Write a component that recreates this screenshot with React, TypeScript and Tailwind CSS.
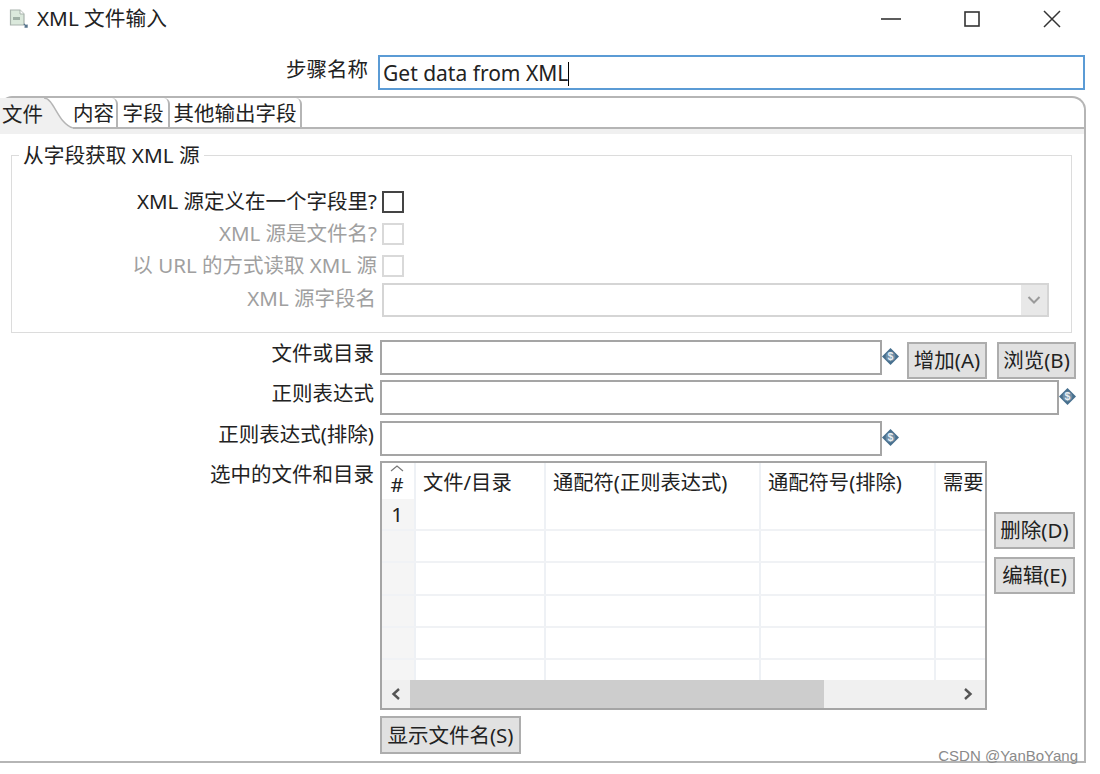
import React from "react";

const FONT = { fontFamily: '"Noto Sans", "Noto Sans CJK SC", sans-serif' };

function Dollar() {
  return (
    <svg width="17" height="17" viewBox="0 0 16 16" className="shrink-0">
      <path d="M8 0 L16 8 L8 16 L0 8 Z" fill="#466f8e" />
      <circle cx="8" cy="8" r="4.6" fill="#6f8da5" />
      <text x="8" y="11.4" textAnchor="middle" fontSize="10" fontWeight="700" fill="#e8eef3" fontFamily="Liberation Sans, sans-serif">$</text>
    </svg>
  );
}

function Btn({ children, w, h = "h-[37px]" }: { children: React.ReactNode; w: string; h?: string }) {
  return (
    <div className={`${w} ${h} shrink-0 flex items-center justify-center bg-[#e1e1e1] border-2 border-[#adadad] text-[20.5px] leading-none text-[#222] whitespace-nowrap`}>
      {children}
    </div>
  );
}

function Check({ disabled }: { disabled?: boolean }) {
  return <div className={`w-[22px] h-[22px] border-2 bg-white ${disabled ? "border-[#d9d9d9]" : "border-[#444]"}`} />;
}

function GroupRow({ label, disabled, h }: { label: string; disabled?: boolean; h: string }) {
  return (
    <div className={`flex items-center ${h}`}>
      <div className={`w-[365px] text-right text-[20.5px] leading-none whitespace-nowrap pb-[2px] ${disabled ? "text-[#a0a0a0]" : "text-[#222]"}`}>{label}</div>
      <div className="ml-[5px] -mt-[1px]"><Check disabled={disabled} /></div>
    </div>
  );
}

function FieldLabel({ children }: { children: React.ReactNode }) {
  return <div className="w-[374px] shrink-0 text-right text-[20.5px] leading-none text-[#222] whitespace-nowrap pt-[3px]">{children}</div>;
}

function Input({ w, h }: { w: string; h: string }) {
  return <div className={`${w} ${h} shrink-0 border-2 border-[#a5a5a5] bg-white`} />;
}

const COLS = ["w-[32px]", "w-[130px]", "w-[215px]", "w-[175px]", "w-[51px]"];
const HEAD = ["#", "文件/目录", "通配符(正则表达式)", "通配符号(排除)", "需要"];
const ROWH = ["h-[32px]", "h-[32px]", "h-[33px]", "h-[32px]", "h-[32px]", "h-[20px]"];

export default function App() {
  return (
    <div className="relative w-[1100px] h-[774px] bg-white overflow-hidden text-[#222]" style={FONT}>
      {/* title bar */}
      <div className="h-[38px] flex items-center pl-[9px]">
        <svg width="20" height="20" viewBox="0 0 20 20">
          <path d="M1.5 1 H11 L15 5 V16 H1.5 Z" fill="#dbe9dc" stroke="#a9b4ad" strokeWidth="1.2" />
          <path d="M11 1 V5 H15" fill="#ffffff" stroke="#a9b4ad" strokeWidth="1" />
          <rect x="4" y="8" width="7" height="3" fill="#9fb0a5" />
          <path d="M15 15 L18 18 M18 15.5 V18 H15.5" stroke="#56748c" strokeWidth="1.4" fill="none" />
        </svg>
        <div className="ml-[8px] pb-[2px] text-[20.7px] leading-none whitespace-nowrap">XML 文件输入</div>
        <div className="ml-auto flex items-center">
          <svg width="20" height="16" viewBox="0 0 20 16"><path d="M0 8 H20" stroke="#333" strokeWidth="1.6" /></svg>
          <svg className="ml-[63px]" width="16" height="16" viewBox="0 0 16 16"><rect x="1" y="1" width="14" height="14" fill="none" stroke="#333" strokeWidth="1.6" /></svg>
          <svg className="ml-[63px] mr-[39px]" width="18" height="18" viewBox="0 0 18 18"><path d="M1 1 L17 17 M17 1 L1 17" stroke="#333" strokeWidth="1.5" /></svg>
        </div>
      </div>

      {/* step name */}
      <div className="mt-[17px] flex items-start h-[35px]">
        <div className="w-[368px] text-right text-[20.5px] leading-none pt-[4px] whitespace-nowrap">步骤名称</div>
        <div className="ml-[10px] w-[707px] h-[35px] border-2 border-[#5b9bd5] bg-white flex items-center pl-[3px] pt-[2px] text-[21px] leading-none whitespace-nowrap">
          Get data from XML<span className="w-px h-[24px] bg-black" />
        </div>
      </div>

      {/* tab folder */}
      <div className="mt-[6px] w-[1086px] h-[667px] border-t-2 border-r-2 border-b-2 border-[#b5b5b5] rounded-tr-[14px] rounded-tl-[12px] flex flex-col">
        <div className="h-[31px] flex items-stretch shrink-0 text-[20.5px] leading-none whitespace-nowrap">
          <div className="w-[44px] bg-[#f0f0f0] flex items-center justify-center pt-[2px] pl-[1px]">文件</div>
          <svg width="29" height="31" viewBox="0 0 29 31" className="shrink-0">
            <path d="M0 0 C10 0 14 26 29 31 H0 Z" fill="#f0f0f0" />
            <path d="M0 0 C10 0 14 26 29 30" fill="none" stroke="#b5b5b5" strokeWidth="1.5" />
          </svg>
          <div className="flex-1 flex border-b-2 border-[#b5b5b5]">
            <div className="w-[45px] flex items-center justify-center border-r-2 border-[#b5b5b5] rounded-tr-[6px] pt-[2px] pr-[2px]">内容</div>
            <div className="w-[52px] flex items-center justify-center border-r-2 border-[#b5b5b5] rounded-tr-[6px] pt-[2px]">字段</div>
            <div className="w-[132px] flex items-center justify-center border-r-2 border-[#b5b5b5] rounded-tr-[6px] pt-[2px]">其他输出字段</div>
          </div>
        </div>
        <div className="h-[5px] bg-[#f0f0f0] shrink-0" />

        {/* group */}
        <div className="relative mt-[21px] ml-[11px] w-[1061px] h-[178px] shrink-0 border border-[#dcdcdc] pt-[30px]">
          <div className="absolute left-[7px] -top-[13px] bg-white px-[4px] text-[20.7px] leading-[24px] whitespace-nowrap">从字段获取 XML 源</div>
          <GroupRow label="XML 源定义在一个字段里?" h="h-[32px]" />
          <GroupRow label="XML 源是文件名?" disabled h="h-[32px]" />
          <GroupRow label="以 URL 的方式读取 XML 源" disabled h="h-[32px]" />
          <div className="flex items-center h-[36px]">
            <div className="w-[364px] text-right text-[20.5px] leading-none text-[#a0a0a0] whitespace-nowrap pb-[3px]">XML 源字段名</div>
            <div className="ml-[6px] w-[667px] h-[34px] border-2 border-[#d5d5d5] bg-white flex justify-end items-center">
              <div className="w-[26px] h-full bg-[#e8e8e8] flex items-center justify-center">
                <svg width="14" height="10" viewBox="0 0 14 10"><path d="M1.5 2 L7 7.5 L12.5 2" fill="none" stroke="#9a9a9a" strokeWidth="2" /></svg>
              </div>
            </div>
          </div>
        </div>

        {/* fields */}
        <div className="mt-[7px] flex flex-col">
          <div className="flex h-[40px]">
            <FieldLabel>文件或目录</FieldLabel>
            <div className="ml-[6px]"><Input w="w-[502px]" h="h-[35px]" /></div>
            <div className="mt-[8px]"><Dollar /></div>
            <div className="ml-[8px] mt-[2px] flex gap-[10px]">
              <Btn w="w-[80px]">增加(A)</Btn>
              <Btn w="w-[79px]">浏览(B)</Btn>
            </div>
          </div>
          <div className="flex h-[41px]">
            <FieldLabel>正则表达式</FieldLabel>
            <div className="ml-[6px]"><Input w="w-[679px]" h="h-[35px]" /></div>
            <div className="mt-[8px]"><Dollar /></div>
          </div>
          <div className="flex h-[40px]">
            <FieldLabel>正则表达式(排除)</FieldLabel>
            <div className="ml-[6px]"><Input w="w-[502px]" h="h-[35px]" /></div>
            <div className="mt-[8px]"><Dollar /></div>
          </div>

          <div className="flex">
            <FieldLabel>选中的文件和目录</FieldLabel>
            <div className="ml-[6px] w-[607px] h-[249px] border-2 border-[#a5a5a5] bg-white flex flex-col shrink-0 overflow-hidden">
              <div className="h-[36px] flex shrink-0">
                {HEAD.map((t, i) => (
                  <div key={t} className={`${COLS[i]} shrink-0 relative flex items-center text-[20.3px] leading-none whitespace-nowrap overflow-hidden ${i === 0 ? "justify-center pt-[6px] pr-[2px]" : "pl-[7px] pt-[2px] border-l-2 border-[#eef1f5]"}`}>
                    {i === 0 && (
                      <svg className="absolute left-[8px] top-[2px]" width="14" height="7" viewBox="0 0 14 7"><path d="M1 6 L7 1 L13 6" fill="none" stroke="#777" strokeWidth="1.2" /></svg>
                    )}
                    {t}
                  </div>
                ))}
              </div>
              {ROWH.map((h, r) => (
                <div key={r} className={`${h} flex shrink-0 ${r < 5 ? "border-b-2 border-[#f0f2f5]" : ""}`}>
                  {COLS.map((c, i) => (
                    <div key={c} className={`${c} shrink-0 flex items-center justify-center text-[20.5px] leading-none ${i === 0 ? "bg-[#f5f5f5] pr-[2px]" : "border-l-2 border-[#eef1f5]"}`}>
                      {i === 0 && r === 0 ? "1" : ""}
                    </div>
                  ))}
                </div>
              ))}
              <div className="h-[28px] bg-[#f0f0f0] flex items-stretch shrink-0">
                <div className="w-[28px] flex items-center justify-center">
                  <svg width="12" height="14" viewBox="0 0 12 14"><path d="M9 2 L3.5 7 L9 12" fill="none" stroke="#555" strokeWidth="2.4" /></svg>
                </div>
                <div className="w-[414px] bg-[#cdcdcd]" />
                <div className="ml-auto w-[34px] flex items-center justify-center">
                  <svg width="12" height="14" viewBox="0 0 12 14"><path d="M3 2 L8.5 7 L3 12" fill="none" stroke="#555" strokeWidth="2.4" /></svg>
                </div>
              </div>
            </div>
            <div className="ml-[7px] mt-[51px] flex flex-col gap-[8px]">
              <Btn w="w-[81px]">删除(D)</Btn>
              <Btn w="w-[81px]">编辑(E)</Btn>
            </div>
          </div>

          <div className="mt-[6px] ml-[380px]">
            <Btn w="w-[141px]" h="h-[38px]">显示文件名(S)</Btn>
          </div>
        </div>
      </div>

      <div className="absolute right-[22px] top-[747px] text-[15px] leading-[18px] text-[#8a8a8a] whitespace-nowrap" style={{ fontFamily: '"Liberation Sans", sans-serif' }}>
        CSDN @YanBoYang
      </div>
    </div>
  );
}
